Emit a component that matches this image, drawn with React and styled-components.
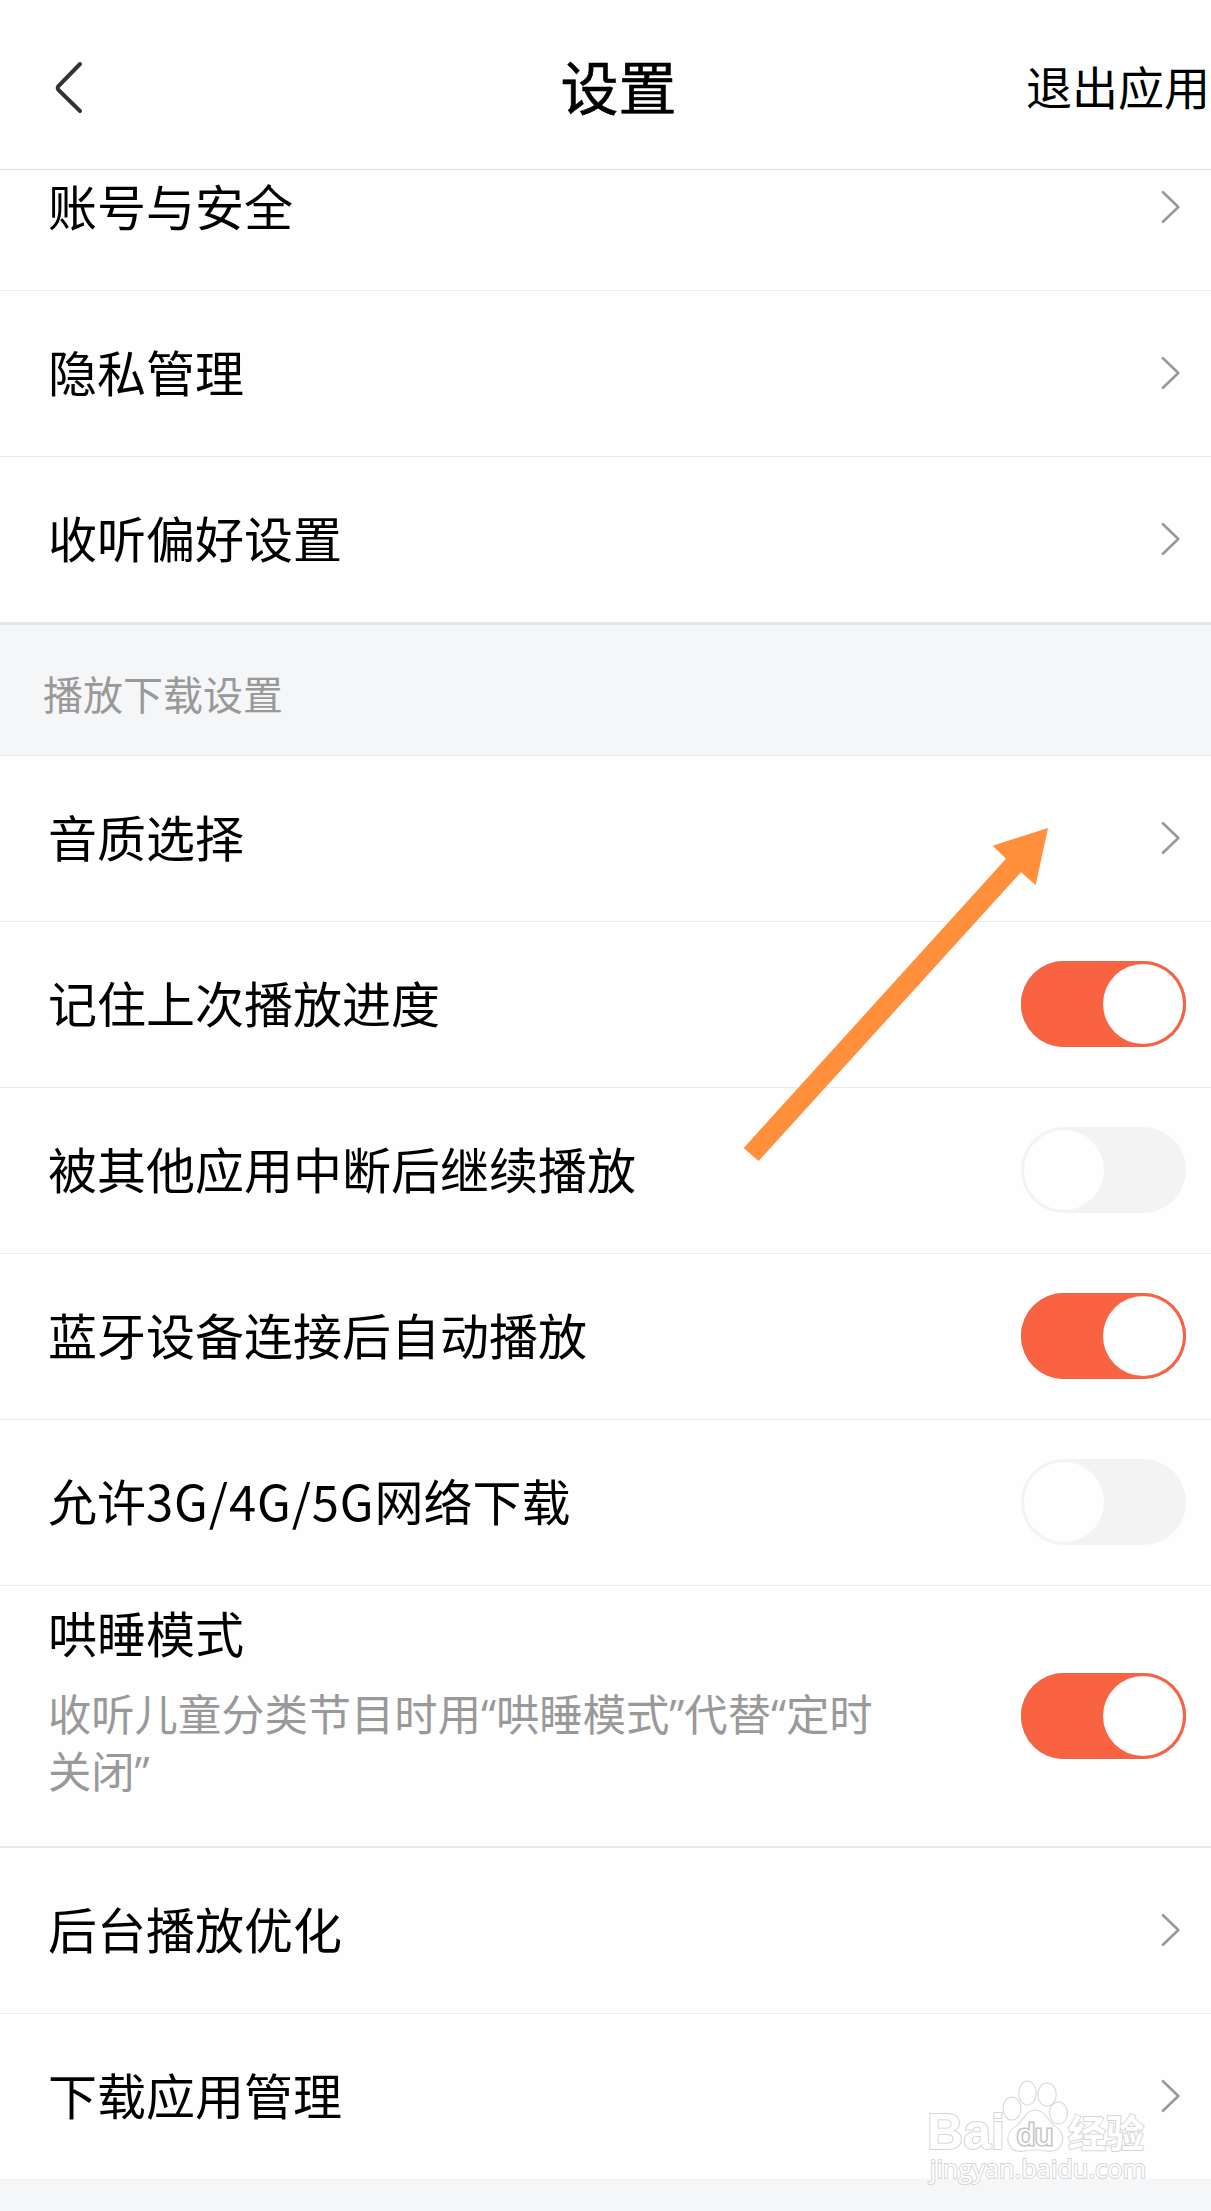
import React, { useState } from 'react';
import styled, { createGlobalStyle } from 'styled-components';

const GlobalStyle = createGlobalStyle`
  body {
    margin: 0;
    background: #fefefe;
    font-family: "Noto Sans CJK SC", sans-serif;
    color: #000;
  }
`;

const ROW_LINE = '#ebebeb';

const Chevron = () => (
  <ChevronIcon viewBox="0 0 19 34">
    <path d="M2 2.2 L17.3 17 L2 31.8" />
  </ChevronIcon>
);

const Switch = ({ initial }) => {
  const [on, setOn] = useState(initial);
  return (
    <Track type="button" role="switch" aria-checked={on} $on={on} onClick={() => setOn(!on)}>
      <Knob />
    </Track>
  );
};

const LinkRow = ({ label, ...rest }) => (
  <Row {...rest}>
    <Label>{label}</Label>
    <Chevron />
  </Row>
);

const SwitchRow = ({ label, on }) => (
  <Row>
    <Label>{label}</Label>
    <Switch initial={on} />
  </Row>
);

const Watermark = () => (
  <WatermarkSvg viewBox="0 0 240 120">
    <text className="latin" x="7" y="78" fontSize="50" fontWeight="700" textLength="78" lengthAdjust="spacingAndGlyphs">Bai</text>
    <ellipse cx="92" cy="37.5" rx="8.5" ry="11" />
    <ellipse cx="107.5" cy="22" rx="8.2" ry="11.5" />
    <ellipse cx="127" cy="23.5" rx="8.8" ry="11" />
    <ellipse cx="138.5" cy="42" rx="8.5" ry="10.5" />
    <path d="M115 39.5 C124 39.5 127 49 134 55 C141 60 143 64 142 70 C140 78 134 81 126 79.5 C119 78 111 78 105 79.5 C96 81 90 78 88.5 70 C87.5 63 91 59 97 55 C104 50 106 39.5 115 39.5 Z" />
    <text className="latin du" x="97" y="73.5" fontSize="29" textLength="36" lengthAdjust="spacingAndGlyphs">du</text>
    <text x="148" y="75.5" fontSize="38" fontWeight="700" textLength="76" lengthAdjust="spacingAndGlyphs">经验</text>
    <text className="url" x="10" y="107" fontSize="25" textLength="216" lengthAdjust="spacingAndGlyphs">jingyan.baidu.com</text>
  </WatermarkSvg>
);

const App = () => (
  <Screen>
    <GlobalStyle />
    <Header>
      <BackButton type="button" aria-label="返回">
        <svg width="30" height="56" viewBox="0 0 30 56">
          <path d="M26 4 L4.5 26 Q3 28 4.5 30 L26 51" />
        </svg>
      </BackButton>
      <Title>设置</Title>
      <ExitButton type="button">退出应用</ExitButton>
    </Header>
    <Content>
      <LinkRow label="账号与安全" $scrolled />
      <LinkRow label="隐私管理" />
      <LinkRow label="收听偏好设置" $last />
      <SectionTitle>播放下载设置</SectionTitle>
      <LinkRow label="音质选择" />
      <SwitchRow label="记住上次播放进度" on />
      <SwitchRow label="被其他应用中断后继续播放" />
      <SwitchRow label="蓝牙设备连接后自动播放" on />
      <SwitchRow label={<>允许<Latin>3G/4G/5G</Latin>网络下载</>} />
      <TallRow>
        <TextBlock>
          <Label>哄睡模式</Label>
          <Description>收听儿童分类节目时用“哄睡模式”代替“定时关闭”</Description>
        </TextBlock>
        <Switch initial />
      </TallRow>
      <LinkRow label="后台播放优化" />
      <LinkRow label="下载应用管理" $plain />
    </Content>
    <Arrow viewBox="0 0 306 334">
      <polygon points="0.7,320 263,30.7 249.7,17.7 305,0 292.7,57 278,44.3 15.5,333" />
    </Arrow>
    <Watermark />
  </Screen>
);

const Screen = styled.div`
  position: relative;
  width: 1211px;
  height: 2211px;
  overflow: hidden;
  display: flex;
  flex-direction: column;
  background: #f5f6f8;
`;

const Header = styled.header`
  box-sizing: border-box;
  flex: none;
  height: 170px;
  padding: 7px 1px 0 54px;
  display: grid;
  grid-template-columns: 1fr auto 1fr;
  align-items: center;
  background: #fefefe;
  border-bottom: 1px solid #dcdcdc;
`;

const BackButton = styled.button`
  justify-self: start;
  display: flex;
  padding: 0;
  border: 0;
  background: none;
  svg {
    fill: none;
    stroke: #333;
    stroke-width: 4;
    stroke-linecap: round;
  }
`;

const Title = styled.h1`
  margin: 0 0 7px -27px;
  font-size: 58px;
  line-height: 80px;
  font-weight: 400;
  -webkit-text-stroke: 0.6px #000;
`;

const ExitButton = styled.button`
  justify-self: end;
  margin-bottom: 7px;
  padding: 0;
  border: 0;
  background: none;
  font: 400 46px/66px "Noto Sans CJK SC", sans-serif;
  color: #000;
`;

const Content = styled.main`
  flex: none;
  overflow: hidden;
`;

const Row = styled.div`
  box-sizing: border-box;
  height: ${({ $last, $plain }) => ($last ? 168 : $plain ? 165 : 166)}px;
  margin-top: ${({ $scrolled }) => ($scrolled ? '-45px' : '0')};
  padding: 0 25px 0 48px;
  display: flex;
  align-items: center;
  justify-content: space-between;
  background: #fefefe;
  border-bottom: ${({ $last, $plain }) => ($plain ? '0' : $last ? '3px solid #e6e6e6' : `1px solid ${ROW_LINE}`)};
`;

const TallRow = styled(Row)`
  height: 262px;
  border-bottom: 2px solid #e9e9e9;
`;

const TextBlock = styled.div`
  align-self: flex-start;
  width: 850px;
  padding-top: 13px;
`;

const Label = styled.div`
  padding-bottom: 6px;
  font-size: 49px;
  line-height: 66px;
`;

const Latin = styled.span`
  letter-spacing: 0.9px;
`;

/* Open Sans comes first so the curly quotes stay narrow */
const Description = styled.div`
  margin-top: 15px;
  font-family: "Open Sans", "Noto Sans CJK SC", sans-serif;
  font-size: 43.3px;
  line-height: 57px;
  color: #999;
`;

const SectionTitle = styled.div`
  box-sizing: border-box;
  height: 131px;
  padding: 6px 43px 0;
  display: flex;
  align-items: center;
  font-size: 40px;
  color: #999;
  border-bottom: 1px solid ${ROW_LINE};
`;

const ChevronIcon = styled.svg`
  width: 19px;
  height: 34px;
  margin: 0 6px 2px 0;
  fill: none;
  stroke: #999;
  stroke-width: 2.6;
  stroke-linecap: round;
  stroke-linejoin: round;
`;

const Track = styled.button`
  box-sizing: border-box;
  flex: none;
  width: 165px;
  height: 86px;
  margin-bottom: 1px;
  padding: 3px;
  display: flex;
  align-items: center;
  justify-content: ${({ $on }) => ($on ? 'flex-end' : 'flex-start')};
  border: 0;
  border-radius: 43px;
  background: ${({ $on }) => ($on ? '#fa6342' : '#f3f3f3')};
  box-shadow: ${({ $on }) => ($on ? 'inset 0 0 0 1px #e3694e' : 'none')};
`;

const Knob = styled.span`
  width: 80px;
  height: 80px;
  border-radius: 50%;
  background: #fefefe;
`;

/* pointer drawn over the rows */
const Arrow = styled.svg`
  position: absolute;
  left: 743px;
  top: 828px;
  width: 306px;
  height: 334px;
  fill: #ff8f3a;
  pointer-events: none;
`;

const WatermarkSvg = styled.svg`
  position: absolute;
  left: 920px;
  top: 2071px;
  width: 240px;
  height: 120px;
  fill: #fefefe;
  stroke: #d6d6d6;
  stroke-width: 2;
  paint-order: stroke;
  font-family: "Noto Sans CJK SC", sans-serif;
  pointer-events: none;
  .latin {
    font-family: "Liberation Sans", sans-serif;
  }
  .du {
    stroke: #c4c4c4;
    stroke-width: 3;
  }
  .url {
    font-family: "Open Sans", sans-serif;
  }
`;

export default App;
